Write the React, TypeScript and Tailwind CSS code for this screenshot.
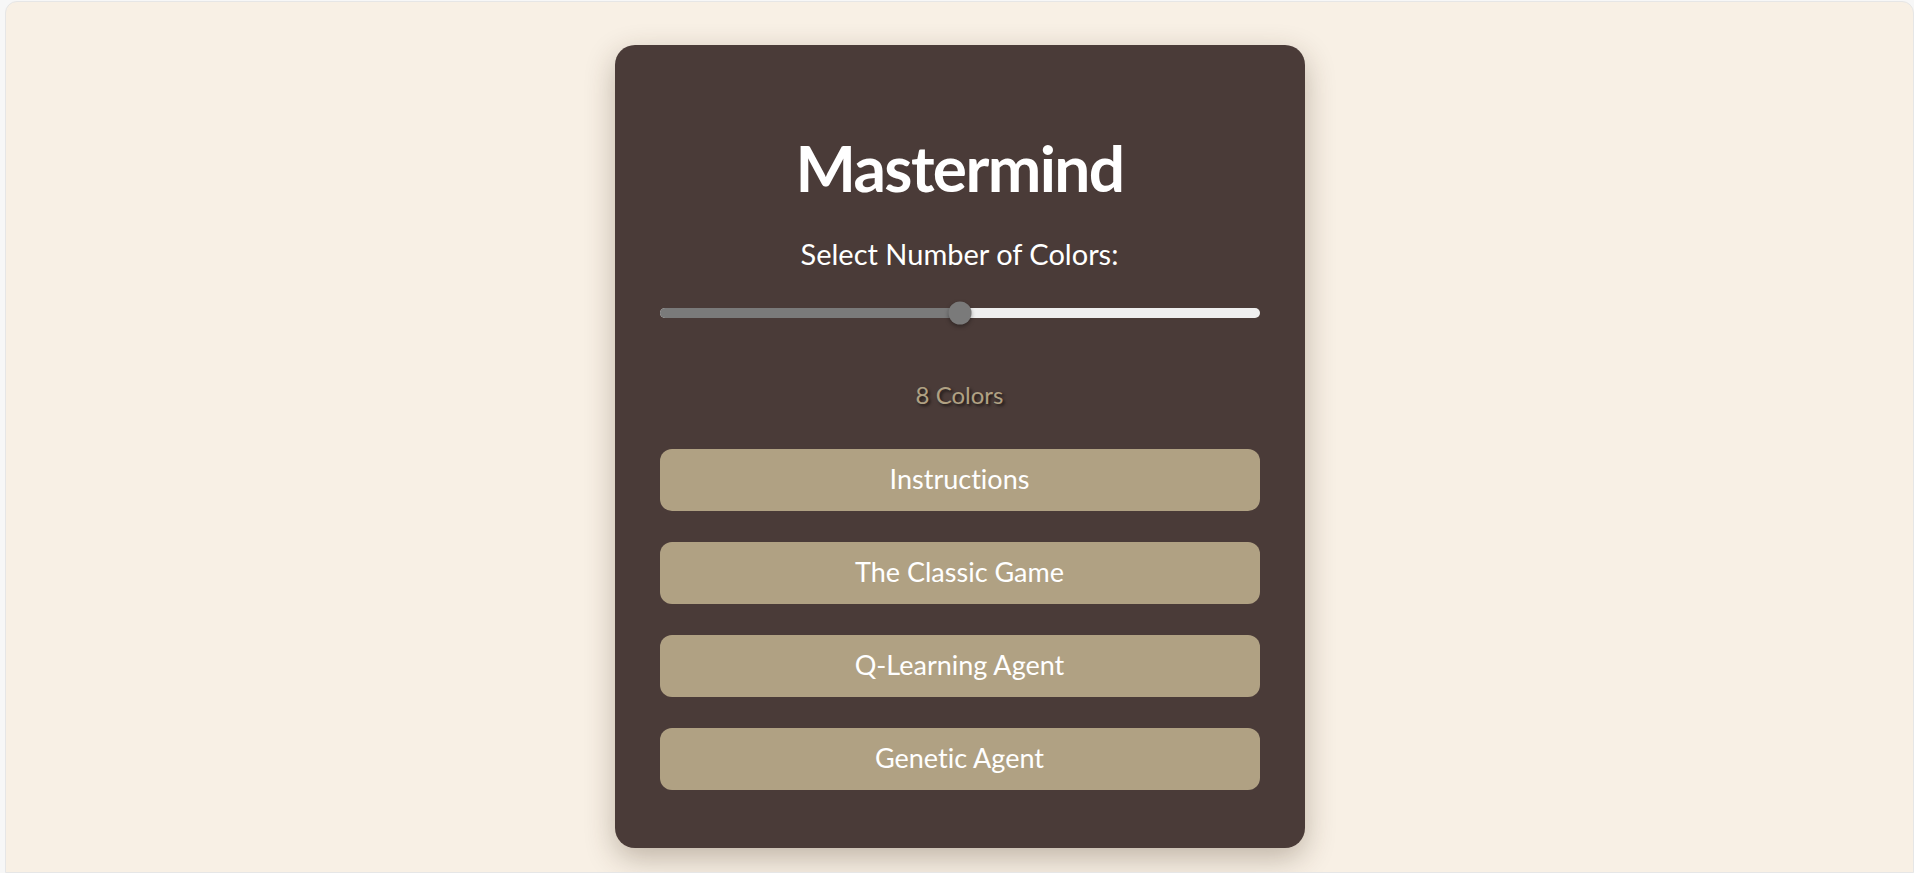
export default function App() {
  const buttons = ['Instructions', 'The Classic Game', 'Q-Learning Agent', 'Genetic Agent'];
  const pct = 50;

  return (
    <div
      className="min-h-[873px] bg-[#f7f7f7] pl-[5px] pt-[1px] [font-variant-ligatures:none]"
      style={{ fontFamily: 'Lato, "Open Sans", sans-serif' }}
    >
      <div className="h-[872px] overflow-hidden rounded-tl-xl rounded-tr-xl border border-[#e6e6e6] bg-[#f8f0e5] flex justify-center">
        <div className="mt-[43px] h-[803px] w-[690px] rounded-[20px] bg-[#4a3b38] px-[45px] pt-[91px] shadow-[0_10px_30px_rgba(60,40,20,0.3)] flex flex-col items-center">
          <h1 className="text-[64px] leading-none font-bold text-white tracking-tight">Mastermind</h1>
          <p className="mt-[32px] text-[29px] text-white">Select Number of Colors:</p>

          <div className="relative mt-[32px] h-[10px] w-full rounded-full bg-[#efefef]">
            <div className="h-full rounded-l-full bg-[#7a7a7a]" style={{ width: `${pct}%` }} />
            <div
              className="absolute top-1/2 h-[23px] w-[23px] -translate-x-1/2 -translate-y-1/2 rounded-full bg-[#7a7a7a] shadow-[0_2px_4px_rgba(0,0,0,0.35)]"
              style={{ left: `${pct}%` }}
            />
          </div>

          <p className="mt-[59px] text-[24px] text-[#b0a183] [text-shadow:2px_2px_3px_rgba(0,0,0,0.6)]">8 Colors</p>

          <div className="mt-[36px] flex w-full flex-col gap-[31px]">
            {buttons.map((b) => (
              <button key={b} className="h-[62px] w-full rounded-[12px] bg-[#b0a183] text-[27px] text-white">
                {b}
              </button>
            ))}
          </div>
        </div>
      </div>
    </div>
  );
}
